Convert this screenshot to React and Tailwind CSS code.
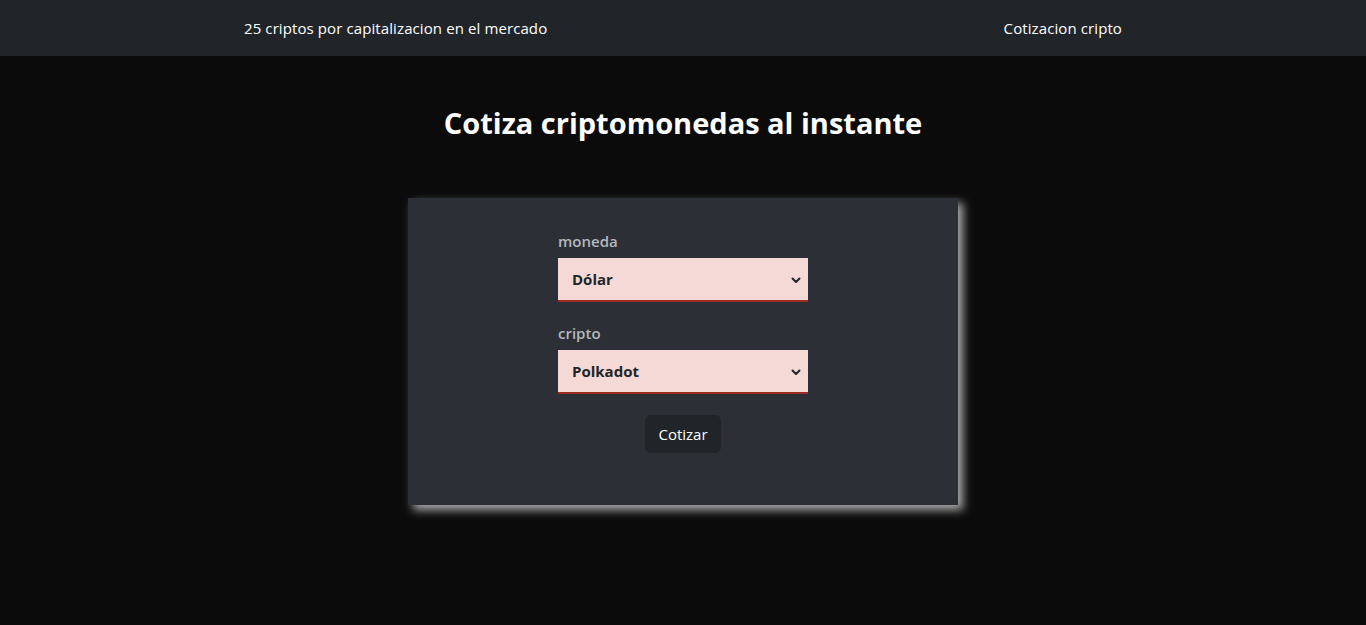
import React from "react";

function Chevron() {
  return (
    <svg width="10" height="8" viewBox="0 0 10 8" className="pointer-events-none absolute right-[7px] top-1/2 -translate-y-1/2">
      <path d="M1.5 2.5 L5 6 L8.5 2.5" fill="none" stroke="#212529" strokeWidth="2" strokeLinecap="round" strokeLinejoin="round" />
    </svg>
  );
}

function Field({ label, value, options, className }) {
  return (
    <div className={className}>
      <label className="block text-[15px] leading-6 font-semibold text-[#b4b8bd] mb-[5px]">{label}</label>
      <div className="relative">
        <select
          defaultValue={value}
          className="block w-full h-[44px] appearance-none bg-[#f5d9d6] border-0 border-b-2 border-[#9b2c24] pl-[14px] pr-6 text-[15px] font-bold text-[#212529] outline-none"
        >
          {options.map((o) => (
            <option key={o}>{o}</option>
          ))}
        </select>
        <Chevron />
      </div>
    </div>
  );
}

export default function App() {
  return (
    <div className="min-h-[625px] bg-[#0b0b0b] text-white" style={{ fontFamily: '"Open Sans", "Noto Sans", sans-serif' }}>
      <nav className="h-14 bg-[#212529] flex items-center justify-between px-[244px] text-[15px] whitespace-nowrap">
        <span className="tracking-[0.1px]">25 criptos por capitalizacion en el mercado</span>
        <span className="tracking-[0.1px]">Cotizacion cripto</span>
      </nav>
      <h2 className="mt-[48px] text-center text-[29px] leading-[38px] font-bold">Cotiza criptomonedas al instante</h2>
      <div className="mx-auto mt-[56px] w-[550px] h-[307px] bg-[#2c2f35] shadow-[5px_5px_9px_rgba(190,190,190,0.9)] pt-[31px]">
        <div className="mx-auto w-[250px]">
          <Field label="moneda" value="Dólar" options={["Dólar", "Peso Mexicano", "Euro", "Libra Esterlina"]} />
          <Field className="mt-[19px]" label="cripto" value="Polkadot" options={["Bitcoin", "Ethereum", "Polkadot"]} />
          <div className="mt-[21px] flex justify-center">
            <button className="h-[38px] w-[76px] rounded-md bg-[#212529] text-[15px] text-white">Cotizar</button>
          </div>
        </div>
      </div>
    </div>
  );
}
